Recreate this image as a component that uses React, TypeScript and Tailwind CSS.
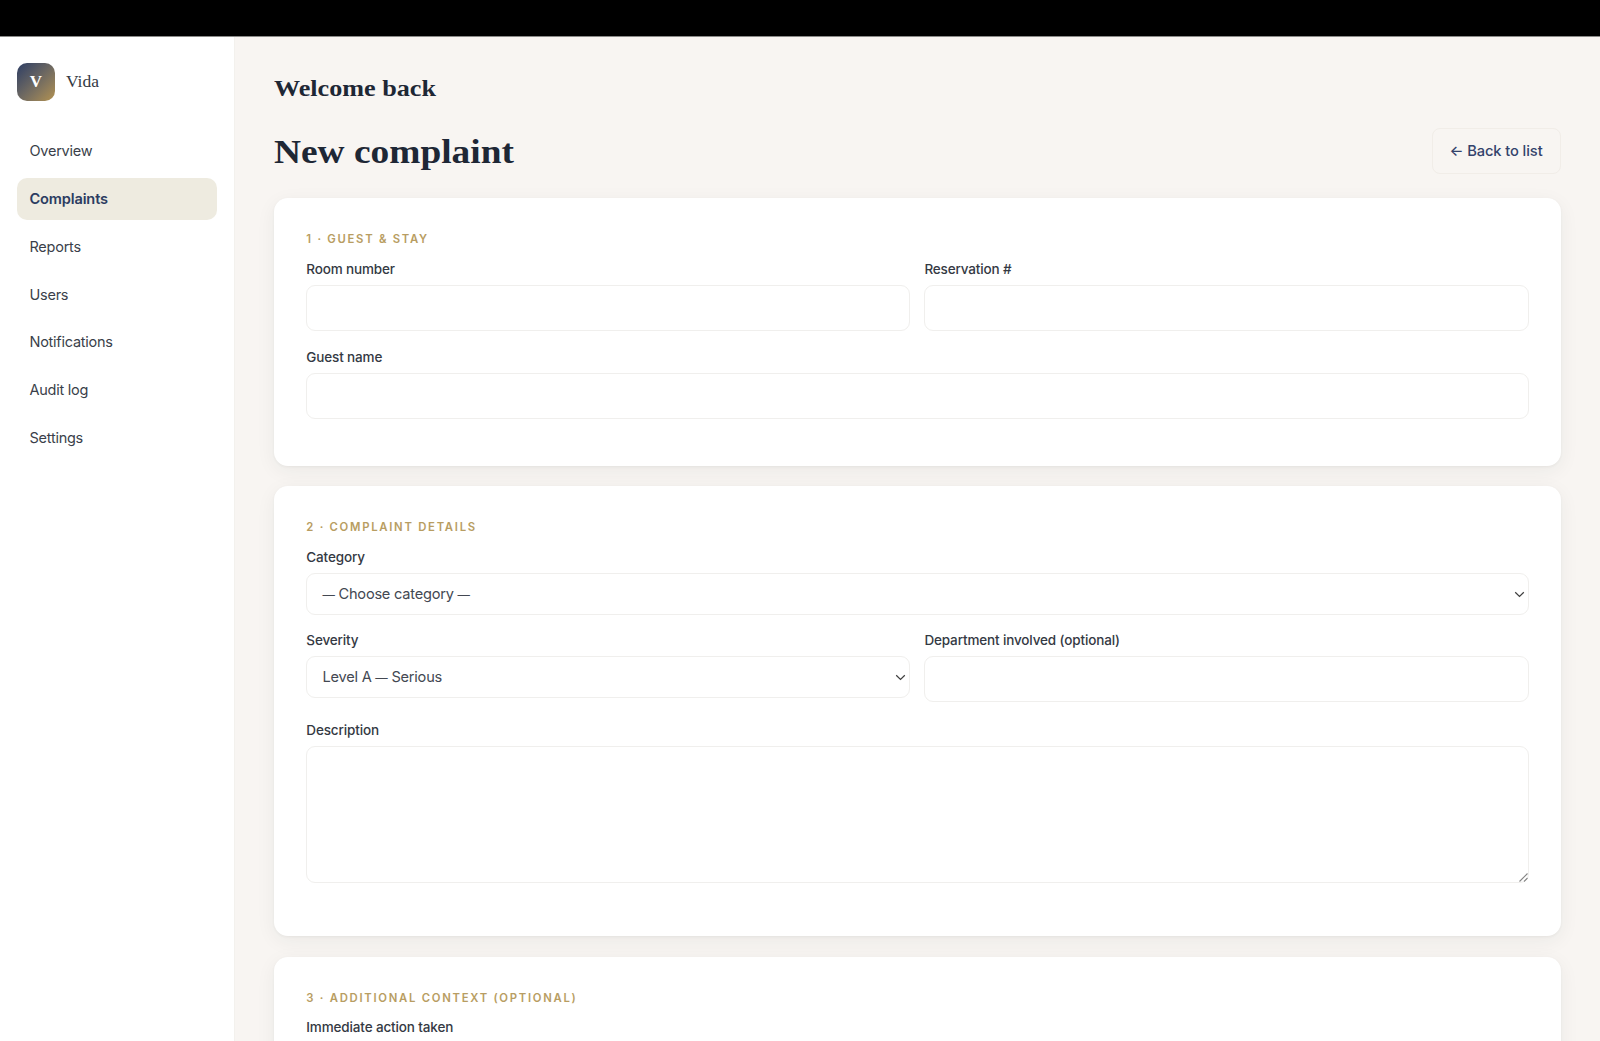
import type { ReactNode } from "react";

const navItems = ["Overview", "Complaints", "Reports", "Users", "Notifications", "Audit log", "Settings"];

function Sidebar() {
  return (
    <aside className="w-[235px] shrink-0 border-r border-[#f3f1ed] bg-white pl-[17px] pr-[17px] pt-[26px]">
      <div className="flex items-center gap-[11px]">
        <div className="flex h-[38px] w-[38px] items-center justify-center rounded-[10px] bg-linear-135 from-[#2e3d63] to-[#b3924e] font-['Liberation_Serif',serif] text-[17px] font-bold text-white">
          V
        </div>
        <span className="font-['Liberation_Serif',serif] text-[17.5px] leading-none text-[#353a44]">Vida</span>
      </div>
      <nav className="mt-[29px] flex flex-col gap-[6px]">
        {navItems.map((item) => (
          <a
            key={item}
            className={
              item === "Complaints"
                ? "flex h-[41.8px] items-center rounded-[10px] bg-[#eeebe0] pl-[12.5px] pt-[1.6px] text-[14.6px] font-semibold tracking-[-0.15px] text-[#2c3c61]"
                : "flex h-[41.8px] items-center rounded-[10px] pl-[12.5px] pt-[0.5px] text-[14.5px] tracking-[-0.25px] text-[#3a3f4a]"
            }
          >
            {item}
          </a>
        ))}
      </nav>
    </aside>
  );
}

function Card({ title, className, children }: { title: string; className: string; children: ReactNode }) {
  return (
    <section
      className={`shrink-0 rounded-[14px] bg-white px-[32px] pt-[33px] shadow-[0_5px_20px_rgba(40,50,50,0.06),0_1px_3px_rgba(40,50,50,0.05)] ${className}`}
    >
      <h2 className="h-[16px] text-[11.3px] font-semibold leading-[16px] tracking-[1.73px] text-[#b89d62] uppercase">{title}</h2>
      {children}
    </section>
  );
}

function Field({ label, className = "", children }: { label: string; className?: string; children: ReactNode }) {
  return (
    <div className={`flex flex-col gap-[6px] ${className}`}>
      <label className="text-[13.5px] font-medium leading-[20px] tracking-[-0.14px] text-[#343943]">{label}</label>
      {children}
    </div>
  );
}

function TextInput() {
  return <input className="h-[46px] w-full rounded-[9px] border border-[#f0efed] bg-white px-4 text-[15px] outline-none" />;
}

function Dash() {
  return <span className="text-[12.4px]">—</span>;
}

function SelectBox({ children }: { children: ReactNode }) {
  return (
    <div className="flex h-[42px] items-center justify-between rounded-[9px] border border-[#f0efed] bg-white pl-[15.2px] pr-[3px] text-[14.6px] tracking-[-0.23px] text-[#434852]">
      <span className="pt-[2px]">{children}</span>
      <svg width="11" height="7" viewBox="0 0 11 7" fill="none" stroke="#404040" strokeWidth="1.25">
        <path d="M1.2 1.2 5.5 5.4 9.8 1.2" />
      </svg>
    </div>
  );
}

export default function App() {
  return (
    <div className="flex h-[1041px] w-[1600px] flex-col overflow-hidden bg-[#f8f5f2] font-['Inter',sans-serif]">
      <div className="h-[37px] shrink-0 border-b border-[#8a8a88] bg-black" />
      <div className="flex min-h-0 flex-1">
        <Sidebar />
        <main className="flex flex-1 flex-col overflow-hidden pl-[39.3px] pr-[39.5px] pt-[36px]">
          <h1 className="h-[30px] shrink-0 origin-left scale-x-109 font-['Liberation_Serif',serif] text-[24px] font-bold leading-[30px] text-[#1e2735]">
            Welcome back
          </h1>
          <div className="mt-[25px] flex h-[46px] shrink-0 items-center justify-between">
            <h2 className="origin-left scale-x-110 pt-[2px] font-['Liberation_Serif',serif] text-[34px] font-bold leading-[44px] text-[#1e2735]">
              New complaint
            </h2>
            <button className="flex h-[46px] w-[129px] items-center justify-center rounded-[8px] border border-[#f1ede8] text-[14.7px] font-medium tracking-[-0.1px] text-[#33426b]">
              ← Back to list
            </button>
          </div>

          <Card title="1 · Guest & stay" className="mt-[24px] h-[267.5px]">
            <div className="mt-[12px] grid grid-cols-2 gap-[14px]">
              <Field label="Room number"><TextInput /></Field>
              <Field label="Reservation #"><TextInput /></Field>
            </div>
            <Field label="Guest name" className="mt-[15.5px]"><TextInput /></Field>
          </Card>

          <Card title="2 · Complaint details" className="mt-[20.5px] h-[449.5px]">
            <Field label="Category" className="mt-[12px]">
              <SelectBox><Dash /> Choose category <Dash /></SelectBox>
            </Field>
            <div className="mt-[15.4px] grid grid-cols-2 gap-[14px]">
              <Field label="Severity">
                <SelectBox>Level A <Dash /> Serious</SelectBox>
              </Field>
              <Field label="Department involved (optional)"><TextInput /></Field>
            </div>
            <Field label="Description" className="mt-[17.7px]">
              <div className="relative h-[137px]">
                <textarea className="block h-full w-full resize-none rounded-[9px] border border-[#f0efed] bg-white px-4 py-3 text-[15px] outline-none" />
                <svg className="absolute right-[1px] bottom-[1px]" width="9" height="9" viewBox="0 0 9 9" stroke="#858585" strokeWidth="1.1">
                  <path d="M0.5 8.5 8.5 0.5M5 8.5 8.5 5" />
                </svg>
              </div>
            </Field>
          </Card>

          <Card title="3 · Additional context (optional)" className="mt-[21px] h-[300px]">
            <Field label="Immediate action taken" className="mt-[11.5px]"><TextInput /></Field>
          </Card>
        </main>
      </div>
    </div>
  );
}
